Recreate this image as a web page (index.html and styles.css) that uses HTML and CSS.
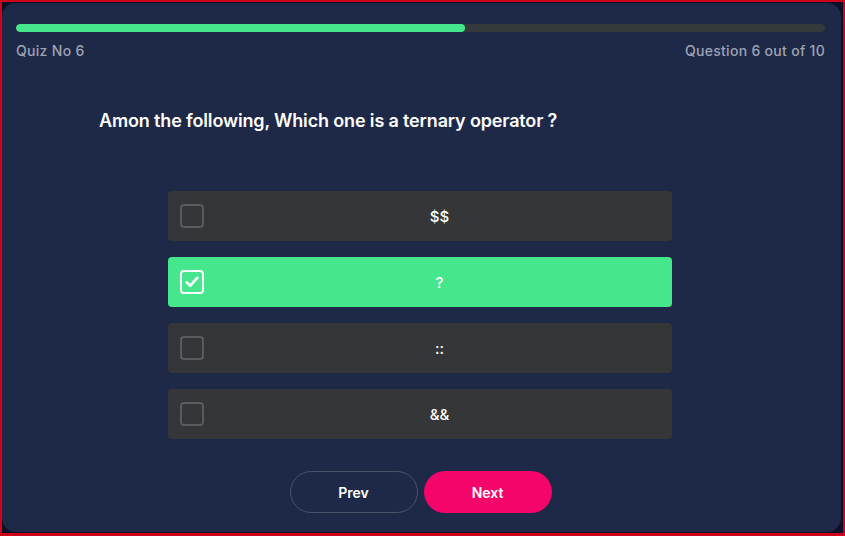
FILE: index.html
```html
<!DOCTYPE html>
<html>
<head>
<meta charset="utf-8">
<link rel="stylesheet" href="styles.css">
</head>
<body>
<div class="frame">
  <div class="card">
    <div class="progress"><div class="progress-fill" style="width:55.5%"></div></div>
    <div class="meta">
      <span>Quiz No 6</span>
      <span>Question 6 out of 10</span>
    </div>
    <h1 class="question">Amon the following, Which one is a ternary operator ?</h1>
    <div class="options">
      <div class="option"><span class="box"></span><span class="label">$$</span></div>
      <div class="option selected"><span class="box"><svg viewBox="0 0 24 24" width="18" height="18"><path d="M5 12.5l4.5 4.5L19 6.5" fill="none" stroke="#fff" stroke-width="3.6" stroke-linecap="round" stroke-linejoin="round"/></svg></span><span class="label">?</span></div>
      <div class="option"><span class="box"></span><span class="label">::</span></div>
      <div class="option"><span class="box"></span><span class="label">&amp;&amp;</span></div>
    </div>
    <div class="actions">
      <button class="btn prev">Prev</button>
      <button class="btn next">Next</button>
    </div>
  </div>
</div>
</body>
</html>
```

FILE: styles.css
```css
* { box-sizing: border-box; }
html, body { margin: 0; padding: 0; }
body {
  width: 845px;
  height: 536px;
  font-family: Inter, "Noto Sans", sans-serif;
}
.frame {
  width: 845px;
  height: 536px;
  border: 2px solid #d0021b;
  border-bottom-width: 3px;
  background: #0b1128;
  padding: 1px 2px 1px 0;
}
.card {
  height: 100%;
  background: #1e2947;
  border-radius: 14px;
  padding: 21px 16px 0 14px;
  display: flex;
  flex-direction: column;
}
.progress {
  height: 8px;
  background: #343a3c;
  border-radius: 4px;
  overflow: hidden;
}
.progress-fill {
  height: 100%;
  background: #45e68c;
  border-radius: 4px;
}
.meta {
  display: flex;
  justify-content: space-between;
  margin-top: 10px;
  font-size: 14px;
  font-weight: 500;
  color: #9ea3b4;
  letter-spacing: 0.3px;
}
.question {
  margin: 51px 0 0 83px;
  font-size: 18px;
  font-weight: 600;
  color: #ffffff;
  letter-spacing: -0.15px;
}
.options {
  margin: 60px 0 0 152px;
  width: 504px;
  display: flex;
  flex-direction: column;
  gap: 16px;
}
.option {
  height: 50px;
  background: #343638;
  border-radius: 4px;
  display: flex;
  align-items: center;
  padding: 0 12px;
}
.option.selected { background: #45e68c; }
.box {
  width: 24px;
  height: 24px;
  border: 2px solid #595b5e;
  border-radius: 4px;
  display: flex;
  align-items: center;
  justify-content: center;
  flex: none;
}
.selected .box { border-color: #ffffff; }
.label {
  flex: 1;
  text-align: center;
  color: #ffffff;
  font-size: 15px;
  font-weight: 500;
  padding-left: 15px;
}
.actions {
  margin-top: 32px;
  display: flex;
  justify-content: center;
  gap: 6px;
}
.btn {
  width: 128px;
  height: 42px;
  border-radius: 21px;
  font-family: Inter, "Noto Sans", sans-serif;
  font-size: 14px;
  font-weight: 600;
  color: #ffffff;
  cursor: pointer;
}
.prev {
  background: transparent;
  border: 1px solid #4b5369;
}
.next {
  background: #f5056a;
  border: none;
}
```
